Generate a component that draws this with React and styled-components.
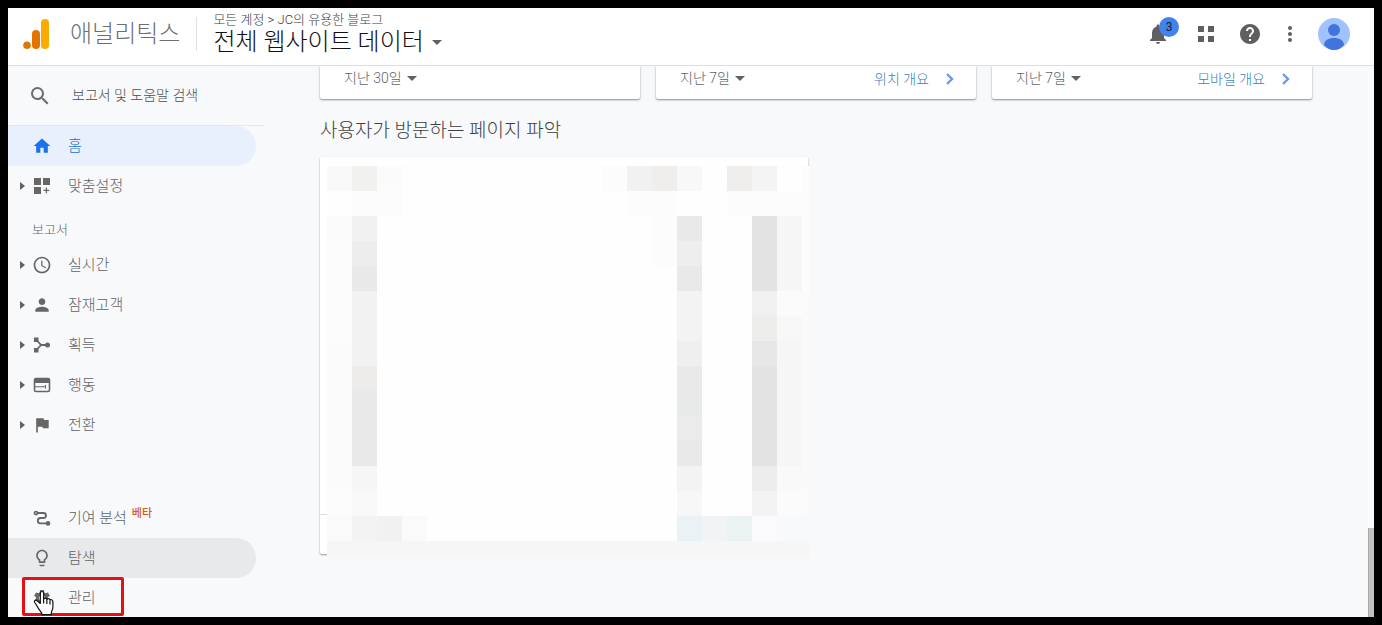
import React from 'react';
import styled, { createGlobalStyle } from 'styled-components';
import {
  MdSearch,
  MdHome,
  MdNotifications,
  MdHelp,
  MdMoreVert,
  MdPerson,
  MdFlag,
  MdAccessTime,
  MdLightbulbOutline,
  MdSettings,
} from 'react-icons/md';

const GlobalStyle = createGlobalStyle`
  * {
    box-sizing: border-box;
  }
  body {
    margin: 0;
    background: #000;
    color: #5f6368;
    font-family: Roboto, 'Noto Sans CJK KR', sans-serif;
    font-size: 14px;
    font-weight: 300;
  }
  button, input, select {
    font: inherit;
    color: inherit;
    border: none;
    background: none;
    padding: 0;
    margin: 0;
  }
  button {
    cursor: pointer;
  }
  a {
    color: inherit;
    text-decoration: none;
  }
`;

const Frame = styled.div`
  display: flex;
  flex-direction: column;
  height: 100vh;
  border: 8px solid #000;
  background: #f8f9fb;
  overflow: hidden;
`;

const Header = styled.header`
  display: flex;
  flex: none;
  align-items: flex-start;
  justify-content: space-between;
  height: 58px;
  padding-right: 24px;
  background: #fff;
  border-bottom: 1px solid #dcdddf;
`;

const Brand = styled.div`
  display: flex;
  align-items: center;
  height: 52px;
  padding-left: 14px;
`;

const BrandName = styled.span`
  margin-left: 16px;
  font-size: 24px;
  line-height: 32px;
  color: #6b6f74;
`;

const Divider = styled.span`
  width: 1px;
  height: 34px;
  margin: 0 16px;
  background: #e0e0e0;
`;

const Account = styled.div`
  display: flex;
  flex-direction: column;
  align-items: flex-start;
  padding-bottom: 4px;
`;

const Breadcrumb = styled.span`
  font-size: 13px;
  line-height: 20px;
  color: #3c4043;
`;

const ViewButton = styled.button`
  display: flex;
  align-items: center;
  gap: 8px;
  font-size: 24px;
  line-height: 24px;
  color: #111;
`;

const Actions = styled.div`
  display: flex;
  align-items: center;
  gap: 16px;
  height: 52px;
  color: #5f5f5f;
`;

const IconButton = styled.button`
  position: relative;
  display: flex;
  margin-right: ${(p) => p.$space || 0}px;
`;

const Badge = styled.span`
  position: absolute;
  top: -5px;
  left: 13px;
  width: 20px;
  height: 20px;
  border-radius: 50%;
  background: #4083ee;
  color: #202124;
  font-size: 12px;
  font-weight: 400;
  line-height: 20px;
  text-align: center;
`;

const Body = styled.div`
  display: flex;
  flex: 1;
  min-height: 0;
`;

const Sidebar = styled.nav`
  flex: none;
  width: 256px;
  overflow: hidden;
`;

const Search = styled.label`
  display: flex;
  align-items: center;
  gap: 20px;
  height: 60px;
  padding-left: 20px;
  border-bottom: 1px solid #e6e8ea;
  color: #6b6b6b;
`;

const SearchInput = styled.input`
  flex: 1;
  min-width: 0;
  padding-bottom: 2px;
  line-height: 20px;
  outline: none;
  &::placeholder {
    color: #4a4d51;
    opacity: 1;
  }
`;

const NavItem = styled.a`
  position: relative;
  display: flex;
  align-items: center;
  width: 248px;
  height: 40px;
  padding-left: 12px;
  border-radius: 0 20px 20px 0;
  font-size: 15px;
  color: ${(p) => (p.$active ? '#1a73c8' : '#5f6368')};
  background: ${(p) => (p.$active ? '#e8f0fe' : p.$hover ? '#e8e9eb' : 'transparent')};
`;

const CaretSlot = styled.span`
  display: flex;
  width: 12px;
`;

const NavIcon = styled.span`
  display: flex;
  width: 20px;
  margin-right: 16px;
  color: ${(p) => (p.$active ? '#1a73e8' : '#666')};
`;

const NavLabel = styled.span`
  line-height: 20px;
`;

const SectionTitle = styled.div`
  height: 39px;
  padding-left: 24px;
  font-size: 13px;
  line-height: 48px;
`;

const NavFooter = styled.div`
  margin-top: 53px;
`;

const Beta = styled.sup`
  align-self: flex-start;
  margin: 10px 0 0 5px;
  font-size: 11px;
  font-weight: 500;
  line-height: 12px;
  color: #d4581c;
`;

const Highlight = styled.span`
  position: absolute;
  top: -1px;
  left: 14px;
  width: 102px;
  height: 39px;
  border: 3px solid #e60f14;
  border-radius: 2px;
`;

const Pointer = styled.svg`
  position: absolute;
  top: 12px;
  left: 25px;
`;

const Main = styled.main`
  flex: 1;
  min-width: 0;
  padding-left: 56px;
  overflow: hidden;
`;

const CardRow = styled.div`
  display: grid;
  grid-template-columns: repeat(3, minmax(0, 320px));
  gap: 16px;
  padding-right: 56px;
`;

const CardFooter = styled.div`
  display: flex;
  justify-content: space-between;
  height: 33px;
  padding: 2px 20px 0 24px;
  background: #fff;
  border-radius: 0 0 2px 2px;
  box-shadow: 0 1px 2px rgba(0, 0, 0, 0.45);
`;

const Period = styled.label`
  display: flex;
  align-items: center;
  gap: 5px;
  height: 20px;
`;

const PeriodSelect = styled.select`
  appearance: none;
  line-height: 20px;
  outline: none;
`;

const CardLink = styled.a`
  display: flex;
  align-items: center;
  gap: 15px;
  height: 22px;
  line-height: 20px;
  color: #3f7fc0;
`;

const Heading = styled.h2`
  margin: 16px 0 10px;
  font-size: 19px;
  font-weight: 300;
  line-height: 32px;
  color: #3c4043;
`;

const PagesCard = styled.section`
  position: relative;
  display: grid;
  width: fit-content;
  padding: 9px 0 0 7px;
  background: #fff;
  border-radius: 2px;
  box-shadow: 0 1px 2px rgba(0, 0, 0, 0.4);
`;

const FooterLine = styled.span`
  position: absolute;
  bottom: 39px;
  left: 0;
  width: 7px;
  height: 1px;
  background: #dcdcdc;
`;

const Mosaic = styled.div`
  position: relative;
  display: grid;
  grid-template-columns: repeat(19, 25px) 8px;
  grid-template-rows: repeat(15, 25px) 16px;
  margin: 0 -2px -3px 0;
  background: #fefefe;
`;

const Block = styled.span`
  grid-column: ${(p) => p.$col + 1} / span ${(p) => p.$cols};
  grid-row: ${(p) => p.$row + 1} / span ${(p) => p.$rows};
  background: ${(p) => p.$color};
`;

const ScrollRail = styled.div`
  display: flex;
  flex: none;
  flex-direction: column;
  justify-content: flex-end;
  width: 6px;
  background: #fafbfd;
`;

const ScrollThumb = styled.div`
  height: 89px;
  background: #c1c1c1;
  border-left: 1px solid #aaa;
`;

// column, row, columns, rows, colour
const blocks = [
  [0, 0, 1, 1, '#f9f9f9'],
  [1, 0, 1, 1, '#f1f1f0'],
  [2, 0, 1, 1, '#fbfbfb'],
  [11, 0, 1, 1, '#fcfcfc'],
  [12, 0, 1, 1, '#f1f1f1'],
  [13, 0, 1, 1, '#efeeec'],
  [14, 0, 1, 1, '#f8f8f8'],
  [16, 0, 1, 1, '#efeeec'],
  [17, 0, 1, 1, '#f4f4f4'],
  [1, 1, 2, 1, '#fcfcfc'],
  [12, 1, 2, 1, '#fcfcfc'],
  [16, 1, 3, 1, '#fcfcfc'],
  [0, 2, 1, 1, '#fafafa'],
  [0, 3, 1, 4, '#fcfcfc'],
  [0, 7, 1, 6, '#fbfbfb'],
  [0, 13, 1, 1, '#fcfcfc'],
  [1, 2, 1, 1, '#f1f1f1'],
  [1, 3, 1, 1, '#ededed'],
  [1, 4, 1, 1, '#e9e9e9'],
  [1, 5, 1, 3, '#f2f2f2'],
  [1, 8, 1, 1, '#eeebeb'],
  [1, 9, 1, 3, '#e9e9e9'],
  [1, 12, 1, 1, '#f6f6f6'],
  [1, 13, 1, 1, '#f9f9f9'],
  [13, 2, 1, 2, '#fcfcfc'],
  [14, 2, 1, 1, '#e9e9e9'],
  [14, 3, 1, 1, '#eeeeee'],
  [14, 4, 1, 1, '#e9e9e9'],
  [14, 5, 1, 2, '#f3f3f3'],
  [14, 7, 1, 1, '#efefef'],
  [14, 8, 1, 1, '#e9e9e9'],
  [14, 9, 1, 1, '#e8eae9'],
  [14, 10, 1, 1, '#ebebeb'],
  [14, 11, 1, 1, '#e9e9e9'],
  [14, 12, 1, 1, '#f3f3f3'],
  [14, 13, 1, 1, '#f7f7f7'],
  [17, 2, 1, 3, '#e3e3e3'],
  [17, 5, 1, 1, '#f0f0f0'],
  [17, 6, 1, 1, '#ededeb'],
  [17, 7, 1, 1, '#e7e7e7'],
  [17, 8, 1, 4, '#e3e3e3'],
  [17, 12, 1, 1, '#ededed'],
  [17, 13, 1, 1, '#f3f3f3'],
  [18, 2, 1, 3, '#f6f6f6'],
  [18, 5, 1, 1, '#fbfbfb'],
  [18, 6, 1, 1, '#f8f8f8'],
  [18, 7, 1, 5, '#f6f6f6'],
  [18, 12, 1, 1, '#f9f9f9'],
  [18, 13, 1, 1, '#fbfbfb'],
  [19, 0, 1, 5, '#fcfcfc'],
  [19, 5, 1, 9, '#fafafa'],
  [0, 14, 1, 1, '#fafafa'],
  [1, 14, 1, 1, '#f3f3f3'],
  [2, 14, 1, 1, '#f1f1f1'],
  [3, 14, 1, 1, '#fafafa'],
  [14, 14, 1, 1, '#ebf2f6'],
  [15, 14, 1, 1, '#f1f3f5'],
  [16, 14, 1, 1, '#ebf3f2'],
  [17, 14, 1, 1, '#fbfbfd'],
  [18, 14, 2, 1, '#f7f9fb'],
  [0, 15, 20, 1, '#f6f6f7'],
];

const AnalyticsLogo = () => (
  <svg width="32" height="32" viewBox="0 0 32 32" aria-hidden="true">
    <rect x="19" y="1" width="8" height="30" rx="4" fill="#f9ab00" />
    <rect x="10" y="12" width="8" height="19" rx="4" fill="#e37400" />
    <circle cx="5" cy="27.2" r="3.8" fill="#e37400" />
  </svg>
);

const DownCaret = () => (
  <svg width="10" height="5" viewBox="0 0 10 5" aria-hidden="true">
    <path d="M0 0h10L5 5z" fill="#616161" />
  </svg>
);

const RightCaret = () => (
  <svg width="5" height="8" viewBox="0 0 5 8" aria-hidden="true">
    <path d="M0 0l5 4-5 4z" fill="#5f6368" />
  </svg>
);

const Chevron = () => (
  <svg width="12" height="14" viewBox="0 0 12 14" aria-hidden="true">
    <path d="M3 2l5 5-5 5" fill="none" stroke="#6c9be0" strokeWidth="2.4" />
  </svg>
);

const AppsIcon = () => (
  <svg width="24" height="24" viewBox="0 0 24 24" aria-hidden="true">
    <path d="M4 4h6v6H4zM14 4h6v6h-6zM4 14h6v6H4zM14 14h6v6h-6z" fill="currentColor" />
  </svg>
);

const Avatar = () => (
  <svg width="32" height="32" viewBox="0 0 32 32" aria-hidden="true">
    <circle cx="16" cy="16" r="16" fill="#a0c3ff" />
    <circle cx="16" cy="12" r="6" fill="#4274e0" />
    <path d="M6 27c0-4.500 4.500-7 10-7s10 2.500 10 7c-2.600 3.100-6 5-10 5s-7.400-1.900-10-5z" fill="#4274e0" />
  </svg>
);

const CustomIcon = () => (
  <svg width="20" height="20" viewBox="0 0 20 20" aria-hidden="true">
    <path
      d="M2 2h7v7H2zM11 2h7v7h-7zM2 11h7v7H2zM13.800 11.500h1.200v2.300h2.300V15H15v2.300h-1.200V15h-2.300v-1.200h2.300z"
      fill="currentColor"
    />
  </svg>
);

const AcquisitionIcon = () => (
  <svg width="20" height="20" viewBox="0 0 20 20" aria-hidden="true">
    <path d="M4 4.500l5 5.500-5 5.500M9 10h6" fill="none" stroke="currentColor" strokeWidth="1.800" />
    <path d="M2 2.500h4.500V7H2zM2 13h4.500v4.500H2z" fill="currentColor" />
    <circle cx="15.500" cy="10" r="2.500" fill="currentColor" />
  </svg>
);

const BehaviorIcon = () => (
  <svg width="20" height="20" viewBox="0 0 20 20" aria-hidden="true">
    <rect x="2.500" y="3.500" width="15" height="13" rx="1.500" fill="none" stroke="currentColor" strokeWidth="1.600" />
    <path d="M2 3.500h16V8H2z" fill="currentColor" />
    <path d="M3 11.800h11M13.500 10v3.600" fill="none" stroke="currentColor" strokeWidth="1" />
  </svg>
);

const AttributionIcon = () => (
  <svg width="20" height="20" viewBox="0 0 20 20" aria-hidden="true">
    <path
      d="M5.500 5h6a2.500 2.500 0 0 1 0 5H8.500a2.700 2.700 0 0 0 0 5.400H16"
      fill="none"
      stroke="currentColor"
      strokeWidth="1.800"
    />
    <circle cx="4" cy="5" r="1.700" fill="#aaa" stroke="currentColor" strokeWidth="1.300" />
    <circle cx="16" cy="15.400" r="2.300" fill="currentColor" />
  </svg>
);

const HandPointer = () => (
  <Pointer width="22" height="26" viewBox="0 0 24 28" aria-hidden="true">
    <path
      d="M8 3.500c0-2.700 3.600-2.700 3.600 0v6.300c.5-1.600 3.300-1.500 3.500.4.600-1.400 3.200-1.200 3.400.7.700-1 3.200-.7 3.200 1.600v6.200c0 2.600-1.700 3.700-1.700 5.800v2.200H9.600v-1.600c-1.800-2.600-3.700-4.700-5.200-7.800-.9-1.900-2-2.800-2.700-4.200-.7-1.700 1.500-2.800 2.900-1.600L8 14.500z"
      fill="#fff"
      stroke="#111"
      strokeWidth="1.300"
      strokeLinejoin="round"
    />
    <path d="M11.600 9.500v5M15.100 10.500v4.500M18.500 11.500v4" stroke="#111" strokeWidth="1.300" />
  </Pointer>
);

const reports = [
  { label: '실시간', icon: <MdAccessTime size={20} /> },
  { label: '잠재고객', icon: <MdPerson size={20} /> },
  { label: '획득', icon: <AcquisitionIcon /> },
  { label: '행동', icon: <BehaviorIcon /> },
  { label: '전환', icon: <MdFlag size={20} /> },
];

const cards = [
  { period: '지난 30일' },
  { period: '지난 7일', link: '위치 개요' },
  { period: '지난 7일', link: '모바일 개요' },
];

const NavLink = ({ icon, label, expandable, active, hover, children }) => (
  <NavItem href="#" $active={active} $hover={hover}>
    <CaretSlot>{expandable && <RightCaret />}</CaretSlot>
    <NavIcon $active={active}>{icon}</NavIcon>
    <NavLabel>{label}</NavLabel>
    {children}
  </NavItem>
);

const App = () => {
  return (
    <>
      <GlobalStyle />
      <Frame>
        <Header>
          <Brand>
            <AnalyticsLogo />
            <BrandName>애널리틱스</BrandName>
            <Divider />
            <Account>
              <Breadcrumb>모든 계정 &gt; JC의 유용한 블로그</Breadcrumb>
              <ViewButton>
                전체 웹사이트 데이터
                <DownCaret />
              </ViewButton>
            </Account>
          </Brand>
          <Actions>
            <IconButton aria-label="알림" $space={8}>
              <MdNotifications size={24} />
              <Badge>3</Badge>
            </IconButton>
            <IconButton aria-label="앱" $space={4}>
              <AppsIcon />
            </IconButton>
            <IconButton aria-label="도움말">
              <MdHelp size={24} />
            </IconButton>
            <IconButton aria-label="더보기">
              <MdMoreVert size={24} />
            </IconButton>
            <IconButton aria-label="계정">
              <Avatar />
            </IconButton>
          </Actions>
        </Header>
        <Body>
          <Sidebar>
            <Search>
              <MdSearch size={24} />
              <SearchInput type="text" aria-label="검색" placeholder="보고서 및 도움말 검색" />
            </Search>
            <NavLink icon={<MdHome size={20} />} label="홈" active />
            <NavLink icon={<CustomIcon />} label="맞춤설정" expandable />
            <SectionTitle>보고서</SectionTitle>
            {reports.map((item) => (
              <NavLink key={item.label} icon={item.icon} label={item.label} expandable />
            ))}
            <NavFooter>
              <NavLink icon={<AttributionIcon />} label="기여 분석">
                <Beta>베타</Beta>
              </NavLink>
              <NavLink icon={<MdLightbulbOutline size={20} />} label="탐색" hover />
              <NavLink icon={<MdSettings size={20} />} label="관리">
                <Highlight />
                <HandPointer />
              </NavLink>
            </NavFooter>
          </Sidebar>
          <Main>
            <CardRow>
              {cards.map((card, i) => (
                <CardFooter key={i}>
                  <Period>
                    <PeriodSelect aria-label="기간">
                      <option>{card.period}</option>
                    </PeriodSelect>
                    <DownCaret />
                  </Period>
                  {card.link && (
                    <CardLink href="#">
                      {card.link}
                      <Chevron />
                    </CardLink>
                  )}
                </CardFooter>
              ))}
            </CardRow>
            <Heading>사용자가 방문하는 페이지 파악</Heading>
            <PagesCard>
              <FooterLine />
              <Mosaic>
                {blocks.map(([col, row, cols, rows, color]) => (
                  <Block
                    key={`${col}-${row}`}
                    $col={col}
                    $row={row}
                    $cols={cols}
                    $rows={rows}
                    $color={color}
                  />
                ))}
              </Mosaic>
            </PagesCard>
          </Main>
          <ScrollRail>
            <ScrollThumb />
          </ScrollRail>
        </Body>
      </Frame>
    </>
  );
};

export default App;
